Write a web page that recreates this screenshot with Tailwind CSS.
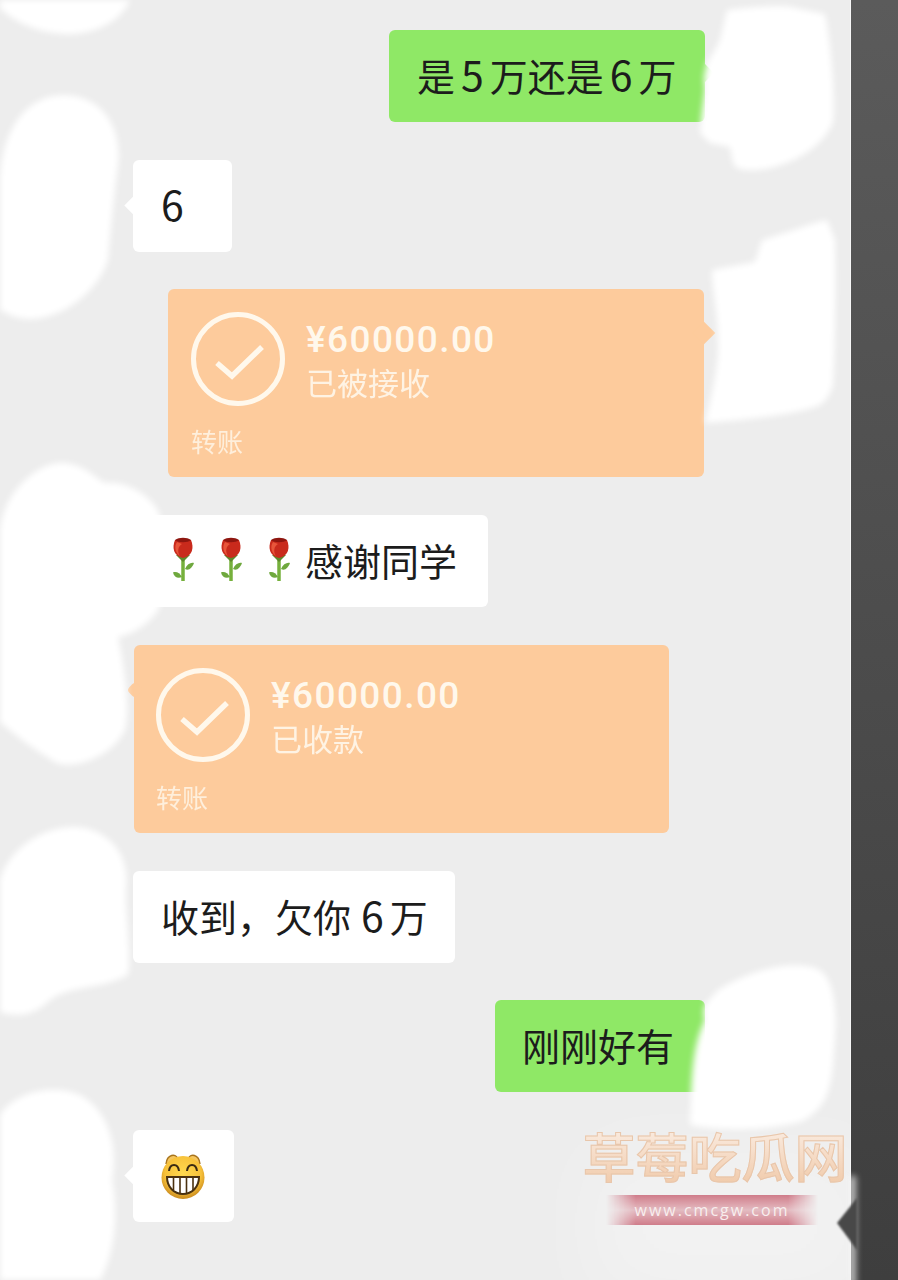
<!DOCTYPE html>
<html lang="zh-CN">
<head>
    <meta charset="UTF-8">
    <title>聊天记录</title>
    <script src="https://cdn.jsdelivr.net/npm/@tailwindcss/browser@4"></script>
</head>
<body class="bg-[#ededed]">
<div class="relative flex w-[898px] h-[1280px] overflow-hidden font-['Noto_Sans_CJK_SC','Noto_Sans',sans-serif] text-[#1c1c1c]">

    <!-- chat column -->
    <div class="relative overflow-hidden w-[850px] h-full bg-[#ededed] flex flex-col gap-[38px] pt-[30px]">

        <!-- lighter patch behind the watermark -->
        <div class="absolute left-[590px] top-[1150px] w-[280px] h-[150px] bg-white/30 blur-2xl"></div>

        <div class="relative self-end mr-[145px] w-[316px] h-[92px] bg-[#8fe866] rounded-md flex items-center pl-[28px] pb-[6px] text-[38px] leading-none">
            <span class="absolute right-[-6px] top-[36px] w-[14px] h-[14px] bg-[#8fe866] rotate-45"></span>
            <span>是<span class="text-[41px] mx-[6px]">5</span>万还是<span class="text-[41px] mx-[6px]">6</span>万</span>
        </div>

        <div class="relative self-start ml-[133px] w-[99px] h-[92px] bg-white rounded-md flex items-center pl-[28px] pb-[6px] text-[41px] leading-none">
            <span class="absolute left-[-6px] top-[39px] w-[13px] h-[13px] bg-white rotate-45"></span>
            6
        </div>

        <div class="relative self-end -mt-px mr-[146px] w-[536px] h-[188px] bg-[#fdcb9c] rounded-md pl-[23px] pt-[23px] text-[#fff8ec]">
            <span class="absolute right-[-8px] top-[36px] w-[16px] h-[16px] bg-[#fdcb9c] rotate-45"></span>
            <div class="flex gap-[21px]">
                <svg class="w-[94px] h-[94px] shrink-0" viewBox="0 0 94 94" fill="none" stroke="#fff8ec">
                    <circle cx="47" cy="47" r="44.5" stroke-width="5"/>
                    <path d="M26 51 L41 64 L71 35" stroke-width="5.5"/>
                </svg>
                <div class="flex flex-col pt-[7px]">
                    <span class="text-[37px] leading-[42px] font-medium tracking-[1.4px] font-['Roboto','Noto_Sans',sans-serif]">¥60000.00</span>
                    <span class="text-[31px] leading-[42px] opacity-90">已被接收</span>
                </div>
            </div>
            <div class="text-[26px] leading-[30px] mt-[20px] opacity-80">转账</div>
        </div>

        <div class="relative self-start ml-[133px] w-[355px] h-[92px] bg-white rounded-md flex items-center pl-[38px] pb-[3px] text-[38px] leading-none">
            <svg class="w-[24px] h-[45px] mr-[24px]" viewBox="0 0 24 45"><use href="#rose"/></svg>
            <svg class="w-[24px] h-[45px] mr-[24px]" viewBox="0 0 24 45"><use href="#rose"/></svg>
            <svg class="w-[24px] h-[45px] mr-[14px]" viewBox="0 0 24 45"><use href="#rose"/></svg>
            感谢同学
        </div>

        <div class="relative self-start ml-[134px] w-[535px] h-[188px] bg-[#fdcb9c] rounded-md pl-[22px] pt-[23px] text-[#fff8ec]">
            <span class="absolute left-[-5px] top-[39px] w-[12px] h-[12px] bg-[#fdcb9c] rotate-45 rounded-sm"></span>
            <div class="flex gap-[21px]">
                <svg class="w-[94px] h-[94px] shrink-0" viewBox="0 0 94 94" fill="none" stroke="#fff8ec">
                    <circle cx="47" cy="47" r="44.5" stroke-width="5"/>
                    <path d="M26 51 L41 64 L71 35" stroke-width="5.5"/>
                </svg>
                <div class="flex flex-col pt-[7px]">
                    <span class="text-[37px] leading-[42px] font-medium tracking-[1.4px] font-['Roboto','Noto_Sans',sans-serif]">¥60000.00</span>
                    <span class="text-[31px] leading-[42px] opacity-90">已收款</span>
                </div>
            </div>
            <div class="text-[26px] leading-[30px] mt-[20px] opacity-80">转账</div>
        </div>

        <div class="relative self-start ml-[133px] w-[322px] h-[92px] bg-white rounded-md flex items-center pl-[28px] pb-[6px] text-[38px] leading-none">
            <span>收到，欠你<span class="text-[41px] ml-[10px] mr-[6px]">6</span>万</span>
        </div>

        <div class="relative self-end -mt-px mr-[145px] w-[210px] h-[92px] bg-[#8fe866] rounded-md flex items-center pl-[27px] pb-[3px] text-[38px] leading-none">刚刚好有</div>

        <div class="relative self-start ml-[133px] w-[101px] h-[92px] bg-white rounded-md flex items-center pl-[28px]">
            <span class="absolute left-[-6px] top-[39px] w-[13px] h-[13px] bg-white rotate-45"></span>
            <svg class="w-[45px] h-[46px]" viewBox="0 0 45 46">
                <defs>
                    <radialGradient id="face" cx="50%" cy="40%" r="60%">
                        <stop offset="0" stop-color="#ffd94f"/>
                        <stop offset="0.7" stop-color="#f7c13a"/>
                        <stop offset="1" stop-color="#c98a1e"/>
                    </radialGradient>
                </defs>
                <path d="M5 11 C6 1 15 0 17 6 M39 11 C38 1 29 0 27 6" fill="#f5c55e" stroke="#a8741c" stroke-width="1.4"/>
                <circle cx="22" cy="24.5" r="21.5" fill="url(#face)"/>
                <path d="M8 18 C9 10 17 10 18 18 M26 18 C27 10 35 10 36 18" fill="none" stroke="#3a2a12" stroke-width="2"/>
                <path d="M6 24 H38 C38 34 31 41 22 41 C13 41 6 34 6 24 Z" fill="#fff" stroke="#4a3110" stroke-width="2"/>
                <path d="M12.5 25 V37 M19 25 V40 M25.5 25 V40 M32 25 V37" stroke="#4a3110" stroke-width="1.6"/>
            </svg>
        </div>
    </div>

    <!-- dark side strip -->
    <div class="w-[48px] h-full border-l border-[#f7f7f7] bg-gradient-to-b from-[#5b5b5b] to-[#3e3e3e]"></div>

    <!-- painted-over avatars -->
    <svg class="absolute inset-0 w-[898px] h-[1280px] pointer-events-none blur-[3px]" viewBox="0 0 898 1280" fill="#fff">
        <path d="M0 0 H130 C120 25 85 38 55 33 C30 30 10 18 0 8 Z"/>
        <path d="M0 180 C2 130 25 95 65 95 C105 97 122 130 118 165 C112 210 110 240 108 260 C95 300 45 330 10 315 L0 310 Z"/>
        <path d="M727 10 C760 6 790 5 795 8 L825 14 C832 50 835 100 833 122 C822 150 785 168 757 170 C745 170 735 170 733 163 L730 147 L710 143 L700 133 L702 113 L705 90 L704 77 L707 63 L715 50 L720 40 Z"/>
        <path d="M762 240 C790 232 815 222 827 220 L835 240 C836 290 835 350 833 385 C828 400 822 405 815 407 C790 415 745 420 705 423 C712 395 720 360 718 340 C718 310 712 290 712 270 L755 262 Z"/>
        <path d="M0 530 C5 485 45 460 65 463 C85 465 95 478 105 483 C130 480 155 500 160 515 L160 607 C150 625 130 635 118 637 C125 670 130 710 125 730 C110 760 70 770 55 762 C35 750 15 735 0 722 Z"/>
        <path d="M0 880 C10 845 50 822 85 828 C115 835 130 860 126 890 C125 910 132 960 128 975 C100 990 70 985 50 1000 C30 1020 10 1015 0 1012 Z"/>
        <path d="M718 990 C750 970 790 960 815 968 C835 975 838 1010 834 1050 C832 1090 826 1110 800 1122 C760 1132 715 1130 690 1125 C692 1090 690 1050 705 1020 C700 1005 710 1000 718 990 Z"/>
        <path d="M0 1115 C15 1090 60 1082 85 1098 C110 1115 118 1150 112 1180 C120 1220 112 1260 100 1280 H0 Z"/>
    </svg>

    <!-- side strip notch, over a soft white smear -->
    <div class="absolute left-[848px] top-[1176px] w-[8px] h-[110px] bg-[#f4f4f4]/70 blur-[3px]"></div>
    <svg class="absolute left-[830px] top-[1180px] w-[40px] h-[100px] blur-[1px]" viewBox="0 0 40 100">
        <path d="M7 43 L27 18 V70 Z" fill="#484848"/>
    </svg>

    <!-- watermark -->
    <div class="absolute left-[582px] top-[1123px] w-[266px] flex flex-col items-center">
        <div class="text-[53px] leading-[64px] font-medium whitespace-nowrap bg-gradient-to-b from-[#fbefe6] to-[#f0c9a8] bg-clip-text text-transparent [-webkit-text-stroke:1px_#e8c6ab]">草莓吃瓜网</div>
        <div class="relative mt-[8px] ml-[-6px] w-[212px] h-[30px] flex items-center justify-center">
            <div class="absolute inset-0 opacity-90 bg-gradient-to-b from-[#cc7080] via-[#e2b6bd] to-[#cc7080] [mask-image:linear-gradient(90deg,transparent,#000_14%,#000_86%,transparent)]"></div>
            <span class="relative text-[16px] tracking-[2px] text-[#f8eeee] font-['Open_Sans',sans-serif]">www.cmcgw.com</span>
        </div>
    </div>

    <!-- shared rose -->
    <svg class="absolute w-0 h-0">
        <defs>
            <g id="rose">
                <path d="M12 20 V44" stroke="#76b03c" stroke-width="3.5"/>
                <path d="M14 32 C16 27 20 25 23 26 C21 31 18 34 14 32 Z" fill="#6fa83e"/>
                <path d="M11 40 C9 36 5 34 2 35.500 C3 40 7 42 11 40 Z" fill="#6fa83e"/>
                <path d="M5 18 L12 25 L19 18 Z" fill="#5c8a2c"/>
                <path d="M4 3 C1 10 2 19 12 21 C22 19 23 10 20 3 Z" fill="#c92a1c"/>
                <path d="M11 7 C7 9 6 15 9 19 C4 16 3 9 6 5 Z" fill="#e8553a"/>
                <path d="M4 3 C8 0 16 0 20 3 C17 6 7 6 4 3 Z" fill="#8e160f"/>
            </g>
        </defs>
    </svg>
</div>
</body>
</html>
